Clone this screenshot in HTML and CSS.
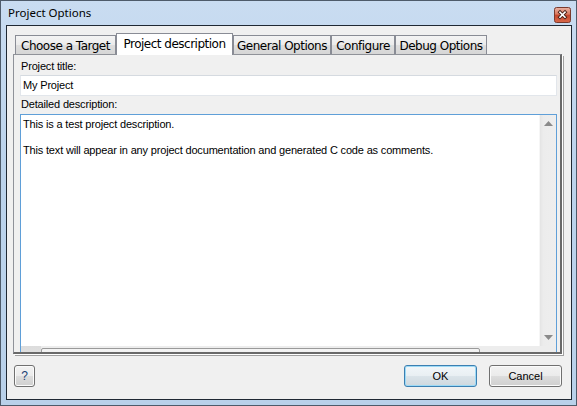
FILE: index.html
```html
<!DOCTYPE html>
<html>
<head>
<meta charset="utf-8">
<link rel="stylesheet" href="styles.css">
</head>
<body>
<div class="window">
  <div class="titlebar">
    <span class="title">Project Options</span>
    <span class="close">
      <svg width="17" height="16" viewBox="0 0 17 16">
        <defs>
          <linearGradient id="cg" x1="0" y1="0" x2="0" y2="1">
            <stop offset="0" stop-color="#eab3a4"/>
            <stop offset="0.45" stop-color="#d9785f"/>
            <stop offset="0.5" stop-color="#c5452c"/>
            <stop offset="1" stop-color="#d96a4b"/>
          </linearGradient>
        </defs>
        <rect x="0.5" y="0.5" width="16" height="15" rx="2" fill="url(#cg)" stroke="#7a3a2e"/>
        <path d="M6 5.2 L11 10.2 M11 5.2 L6 10.2" stroke="#4a2018" stroke-width="3.4" stroke-linecap="square"/>
        <path d="M6 5.2 L11 10.2 M11 5.2 L6 10.2" stroke="#ffffff" stroke-width="1.6" stroke-linecap="square"/>
      </svg>
    </span>
  </div>
  <div class="client">
    <div class="tabs">
      <div class="tab t1">Choose a Target</div>
      <div class="tab active t2">Project description</div>
      <div class="tab t3">General Options</div>
      <div class="tab t4">Configure</div>
      <div class="tab t5">Debug Options</div>
    </div>
    <div class="panel">
      <div class="label">Project title:</div>
      <div class="input">My Project</div>
      <div class="label label2">Detailed description:</div>
      <div class="textarea">
        <div class="text">
          <div class="line">This is a test project description.</div>
          <div class="line">&nbsp;</div>
          <div class="line">This text will appear in any project documentation and generated C code as comments.</div>
        </div>
        <div class="vscroll">
          <div class="arrow"><svg width="9" height="5" viewBox="0 0 9 5"><path d="M0 5 L4.5 0 L9 5 Z" fill="#8a8a8a"/></svg></div>
          <div class="arrow"><svg width="9" height="5" viewBox="0 0 9 5"><path d="M0 0 L4.5 5 L9 0 Z" fill="#8a8a8a"/></svg></div>
        </div>
        <div class="hscroll">
          <div class="hbtn"></div>
          <div class="hthumb"></div>
          <div class="htrack"></div>
        </div>
        <div class="corner"></div>
      </div>
    </div>
    <div class="buttons">
      <button class="btn help">?</button>
      <span class="spacer"></span>
      <button class="btn ok">OK</button>
      <button class="btn cancel">Cancel</button>
    </div>
  </div>
</div>
</body>
</html>
```
FILE: styles.css
```css
* { box-sizing: border-box; }
body {
  margin: 0;
  font-family: "Liberation Sans", Arial, sans-serif;
  font-size: 11px;
  color: #000;
  background: #fff;
}
.window {
  width: 577px;
  height: 406px;
  border: 1px solid #4e5b6a;
  background: linear-gradient(#c9dcf1, #bcd3ec 40%, #b9d1ea);
  padding: 0 4px 5px 5px;
  display: flex;
  flex-direction: column;
}
.titlebar {
  height: 24px;
  display: flex;
  align-items: center;
  padding-left: 2px;
}
.title {
  font-family: "Noto Sans", "DejaVu Sans", sans-serif;
  font-size: 11.5px;
  color: #000;
  margin-top: -1px;
}
.close {
  margin-left: auto;
  margin-right: 1px;
  margin-top: 3px;
  display: flex;
}
.client {
  flex: 1;
  border: 1px solid #1f2833;
  background: #f0f0f0;
  padding: 7px 9px 0 6px;
  display: flex;
  flex-direction: column;
}
.tabs {
  display: flex;
  align-items: flex-end;
  height: 21px;
  padding-left: 2px;
}
.tab {
  height: 19px;
  border: 1px solid #898c95;
  border-bottom: none;
  background: linear-gradient(#f4f4f4, #ebebeb 50%, #dedede 51%, #d6d6d6);
  font-family: "DejaVu Sans", Verdana, sans-serif;
  font-size: 12px;
  letter-spacing: -0.5px;
  display: flex;
  align-items: center;
  justify-content: center;
  white-space: nowrap;
  padding-top: 1px;
}
.tab.active {
  height: 22px;
  background: #ffffff;
  margin-bottom: -1px;
  position: relative;
  z-index: 1;
  padding-top: 0;
  padding-bottom: 2px;
}
.t1 { width: 101px; }
.t2 { width: 117px; }
.t3 { width: 98px; }
.t4 { width: 64px; }
.t5 { width: 92px; }
.panel {
  height: 300px;
  border: 1px solid #8f9299;
  border-right: 2px solid #696969;
  border-bottom: 2px solid #696969;
  box-shadow: 1px 1px 0 #ffffff, 2px 2px 0 #a0a0a0;
  background: #f0f0f0;
  padding: 5px 3px 0 6px;
  overflow: hidden;
  display: flex;
  flex-direction: column;
  letter-spacing: -0.17px;
}
.label {
  height: 13px;
  line-height: 13px;
  padding-left: 1px;
  white-space: nowrap;
}
.input {
  margin-top: 2px;
  height: 21px;
  background: #fff;
  border: 1px solid #e2e6eb;
  border-top-color: #d5dae0;
  line-height: 19px;
  padding-left: 2px;
}
.label2 { margin-top: 2px; }
.textarea {
  margin-top: 3px;
  flex: none;
  height: 250px;
  border: 1px solid #5f9fd8;
  background: #fff;
  display: grid;
  grid-template-columns: 1fr 17px;
  grid-template-rows: 231px 17px;
}
.text {
  padding: 3px 0 0 2px;
  line-height: 13px;
  white-space: nowrap;
  overflow: hidden;
}
.vscroll {
  background: linear-gradient(90deg, #e4e4e4, #ececec 20%, #eeeeee);
  border-left: 1px solid #f6f6f6;
  display: flex;
  flex-direction: column;
  justify-content: space-between;
}
.arrow {
  height: 17px;
  display: flex;
  align-items: center;
  justify-content: center;
}
.hscroll {
  display: flex;
  background: #ededed;
}
.hbtn {
  width: 20px;
  background: linear-gradient(#dcdcdc, #e6e6e6);
}
.hthumb {
  width: 439px;
  border: 1px solid #9a9a9a;
  border-radius: 2px;
  margin-top: 2px;
  background: linear-gradient(#f4f4f4, #e6e6e6);
}
.htrack {
  flex: 1;
  background: #ededed;
}
.corner {
  background: #ededed;
}
.buttons {
  display: flex;
  align-items: flex-start;
  padding-top: 11px;
}
.spacer { flex: 1; }
.btn {
  height: 22px;
  border: 1px solid #707070;
  border-radius: 3px;
  background: linear-gradient(#f2f2f2, #ebebeb 49%, #dddddd 50%, #cfcfcf);
  box-shadow: inset 0 0 0 1px #fbfbfb;
  font-family: "Liberation Sans", Arial, sans-serif;
  font-size: 11px;
  color: #000;
  padding: 0;
  margin: 0;
}
.help {
  width: 21px;
  margin-left: 1px;
  font-size: 12px;
  color: #1b3f73;
}
.ok {
  width: 73px;
  border-color: #3c7fb1;
  box-shadow: inset 0 0 0 1px #9ddaf6;
  background: linear-gradient(#f1f6f9, #e9eff3 49%, #dbe4ea 50%, #cfd8de);
}
.cancel {
  width: 73px;
  margin-left: 12px;
}
```
